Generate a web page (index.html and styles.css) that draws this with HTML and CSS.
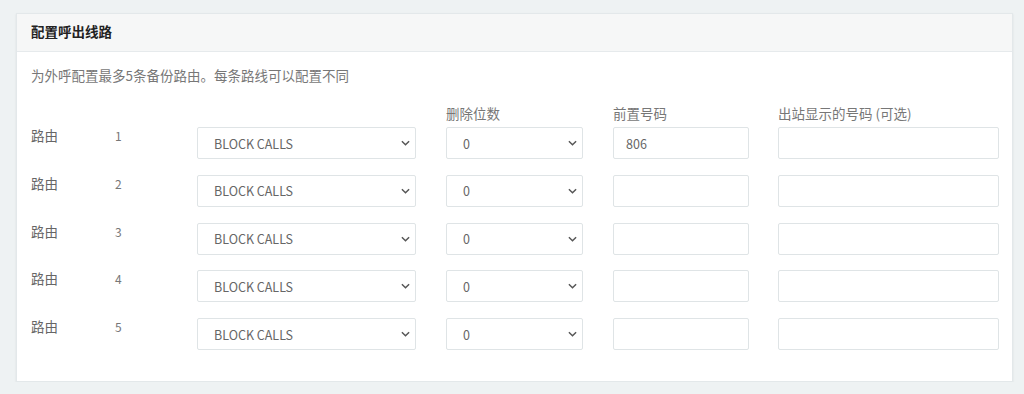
FILE: index.html
```html
<!DOCTYPE html>
<html lang="zh-CN">
<head>
  <meta charset="UTF-8" />
  <title>配置呼出线路</title>
  <link rel="stylesheet" href="styles.css">
</head>
<body>
  <div class="card">
    <div class="card-header">配置呼出线路</div>
    <div class="card-body">
      <p class="intro">为外呼配置最多5条备份路由。每条路线可以配置不同</p>

      <div class="route-grid">
        <div class="head"></div>
        <div class="head"></div>
        <div class="head"></div>
        <div class="head">删除位数</div>
        <div class="head">前置号码</div>
        <div class="head">出站显示的号码 (可选)</div>

        <div class="route-label">路由</div>
        <div class="route-num">1</div>
        <div class="field trunk"><select><option>BLOCK CALLS</option></select><svg class="chev" viewBox="0 0 10 6"><path d="M1 1l4 4 4-4"/></svg></div>
        <div class="field digits"><select><option>0</option></select><svg class="chev" viewBox="0 0 10 6"><path d="M1 1l4 4 4-4"/></svg></div>
        <div class="field prefix"><input type="text" value="806"></div>
        <div class="field callerid"><input type="text"></div>

        <div class="route-label">路由</div>
        <div class="route-num">2</div>
        <div class="field trunk"><select><option>BLOCK CALLS</option></select><svg class="chev" viewBox="0 0 10 6"><path d="M1 1l4 4 4-4"/></svg></div>
        <div class="field digits"><select><option>0</option></select><svg class="chev" viewBox="0 0 10 6"><path d="M1 1l4 4 4-4"/></svg></div>
        <div class="field prefix"><input type="text"></div>
        <div class="field callerid"><input type="text"></div>

        <div class="route-label">路由</div>
        <div class="route-num">3</div>
        <div class="field trunk"><select><option>BLOCK CALLS</option></select><svg class="chev" viewBox="0 0 10 6"><path d="M1 1l4 4 4-4"/></svg></div>
        <div class="field digits"><select><option>0</option></select><svg class="chev" viewBox="0 0 10 6"><path d="M1 1l4 4 4-4"/></svg></div>
        <div class="field prefix"><input type="text"></div>
        <div class="field callerid"><input type="text"></div>

        <div class="route-label">路由</div>
        <div class="route-num">4</div>
        <div class="field trunk"><select><option>BLOCK CALLS</option></select><svg class="chev" viewBox="0 0 10 6"><path d="M1 1l4 4 4-4"/></svg></div>
        <div class="field digits"><select><option>0</option></select><svg class="chev" viewBox="0 0 10 6"><path d="M1 1l4 4 4-4"/></svg></div>
        <div class="field prefix"><input type="text"></div>
        <div class="field callerid"><input type="text"></div>

        <div class="route-label">路由</div>
        <div class="route-num">5</div>
        <div class="field trunk"><select><option>BLOCK CALLS</option></select><svg class="chev" viewBox="0 0 10 6"><path d="M1 1l4 4 4-4"/></svg></div>
        <div class="field digits"><select><option>0</option></select><svg class="chev" viewBox="0 0 10 6"><path d="M1 1l4 4 4-4"/></svg></div>
        <div class="field prefix"><input type="text"></div>
        <div class="field callerid"><input type="text"></div>
      </div>
    </div>
  </div>
</body>
</html>
```

FILE: styles.css
```css
body {
  margin: 0;
  padding: 13px 11px 0 16px;
  background-color: #eef2f3;
  font-family: "Noto Sans CJK SC", "Noto Sans", sans-serif;
  color: #666;
  font-size: 13.5px;
}

.card {
  background: #fff;
  border: 1px solid #e3e8ea;
  box-shadow: 0 1px 2px rgba(0, 0, 0, 0.08);
  height: 369px;
  box-sizing: border-box;
}

.card-header {
  height: 38px;
  line-height: 35px;
  padding: 0 14px 3px;
  box-sizing: border-box;
  background: #f6f7f7;
  border-bottom: 1px solid #e6eaec;
  font-weight: 700;
  font-size: 13.5px;
  color: #222;
}

.card-body {
  padding: 13px 14px 0 14px;
}

.intro {
  margin: 0;
  line-height: 20px;
  color: #777;
}

.route-grid {
  display: grid;
  grid-template-columns: 84px 82px 249px 167px 165px 221px;
  grid-template-rows: 42px;
  grid-auto-rows: 47.8px;
}

.head {
  align-self: end;
  padding-bottom: 4px;
  line-height: 20px;
  color: #777;
}

.route-label {
  margin-top: -2px;
  line-height: 20px;
  color: #666;
}

.route-num {
  margin-top: -1px;
  line-height: 20px;
  font-size: 12px;
  color: #777;
}

.field {
  position: relative;
  height: 32px;
}

.trunk { width: 219px; }
.digits { width: 137px; }
.prefix { width: 136px; }
.callerid { width: 221px; }

.field select,
.field input {
  width: 100%;
  height: 32px;
  box-sizing: border-box;
  border: 1px solid #dfe4e6;
  border-radius: 2px;
  background: #fff;
  font-family: "Noto Sans CJK SC", "Noto Sans", sans-serif;
  font-size: 12.5px;
  color: #666;
  outline: none;
  margin: 0;
}

.field select {
  appearance: none;
  -webkit-appearance: none;
  padding: 0 24px 0 16px;
}

.field input {
  padding: 0 12px;
}

.chev {
  position: absolute;
  right: 6px;
  top: 13px;
  width: 9px;
  height: 6px;
  pointer-events: none;
}

.chev path {
  fill: none;
  stroke: #555;
  stroke-width: 1.6;
}
```
